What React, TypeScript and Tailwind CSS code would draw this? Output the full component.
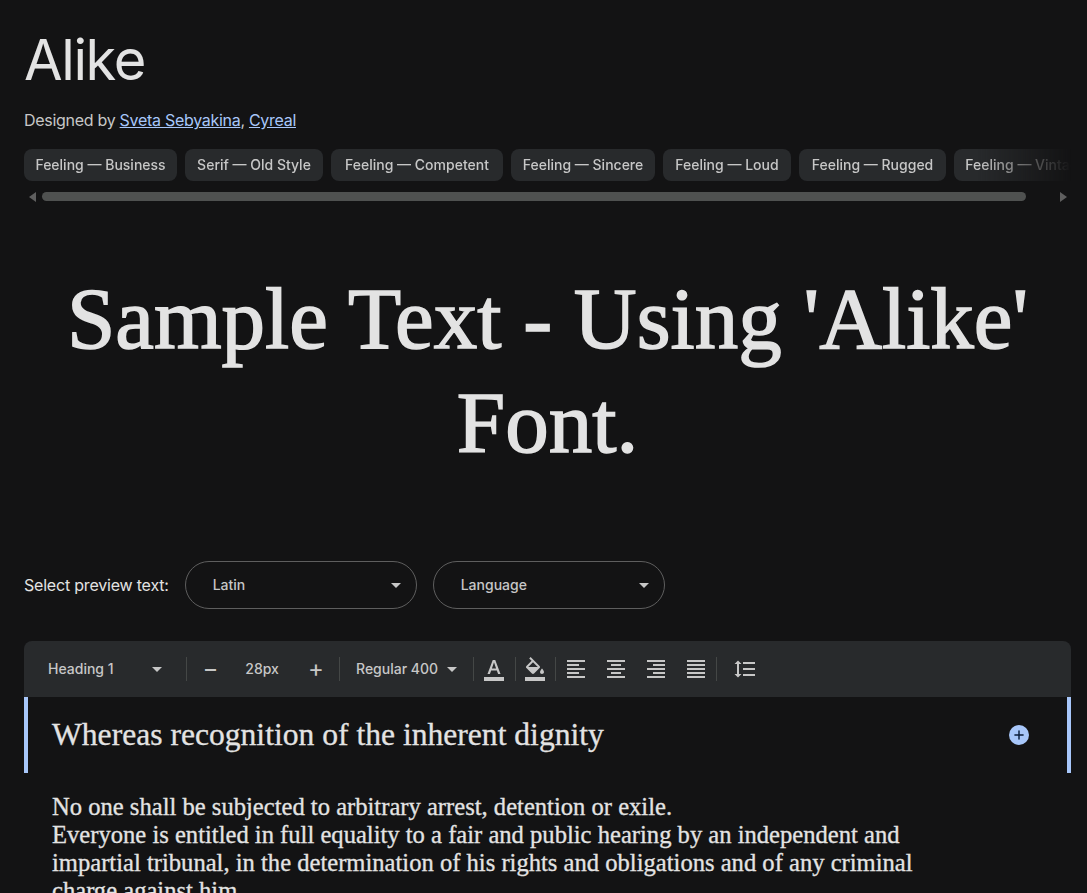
import { Plus } from 'lucide-react'

const chips = [
  { label: 'Feeling — Business', width: 'w-[153px]' },
  { label: 'Serif — Old Style', width: 'w-[138px]' },
  { label: 'Feeling — Competent', width: 'w-[172px]' },
  { label: 'Feeling — Sincere', width: 'w-[144px]' },
  { label: 'Feeling — Loud', width: 'w-[128px]' },
  { label: 'Feeling — Rugged', width: 'w-[147px]' },
  { label: 'Feeling — Vintage', width: 'w-[144px]' },
]

const icons = {
  left: 'M15 15H3v2h12v-2zm0-8H3v2h12V7zM3 13h18v-2H3v2zm0 8h18v-2H3v2zM3 3v2h18V3H3z',
  center: 'M7 15v2h10v-2H7zm-4 6h18v-2H3v2zm0-8h18v-2H3v2zm4-6v2h10V7H7zM3 3v2h18V3H3z',
  right: 'M3 21h18v-2H3v2zm6-4h12v-2H9v2zm-6-4h18v-2H3v2zm6-4h12V7H9v2zM3 3v2h18V3H3z',
  justify: 'M3 21h18v-2H3v2zm0-4h18v-2H3v2zm0-4h18v-2H3v2zm0-4h18V7H3v2zm0-6v2h18V3H3z',
  spacing: 'M6 7h2.5L5 3.5 1.5 7H4v10H1.5L5 20.5 8.5 17H6V7zm4-2v2h12V5H10zm0 14h12v-2H10v2zm0-6h12v-2H10v2z',
  fill: 'M16.56 8.94L7.62 0 6.21 1.41l2.38 2.38-5.15 5.15c-.59.59-.59 1.54 0 2.12l5.5 5.5c.29.29.68.44 1.06.44s.77-.15 1.06-.44l5.5-5.5c.59-.58.59-1.53 0-2.12zM5.21 10L10 5.21 14.79 10H5.21zM19 11.5s-2 2.17-2 3.5c0 1.1.9 2 2 2s2-.9 2-2c0-1.33-2-3.5-2-3.5zM2 20h20v4H2v-4z',
  text: 'M2 20h20v4H2v-4zm3.49-3h2.42l1.27-3.58h5.65L16.09 17h2.42L13.25 3h-2.5L5.49 17zm4.42-5.61l2.03-5.79h.12l2.03 5.79H9.91z',
}

function Icon({ d }: { d: string }) {
  return (
    <svg viewBox="0 0 24 24" className="w-6 h-6 shrink-0 fill-[#c7c7c7]">
      <path d={d} fillRule="evenodd" />
    </svg>
  )
}

function Caret() {
  return <span className="w-0 h-0 border-x-[5px] border-x-transparent border-t-[5px] border-t-[#c7c7c7]" />
}

function Sep() {
  return <span className="w-px h-6 bg-[#444746] shrink-0" />
}

function Select({ label }: { label: string }) {
  return (
    <div className="w-[232px] h-12 rounded-3xl border border-[#5e5e5e] flex items-center justify-between pl-[27px] pr-[15px] text-sm font-medium text-[#c7c7c7]">
      <span>{label}</span>
      <Caret />
    </div>
  )
}

export default function App() {
  return (
    <div className="h-[893px] overflow-hidden bg-[#131314] pl-6 pr-4 text-[#e3e3e3] font-['Inter','Roboto',sans-serif]">
      {/* Header */}
      <h1 className="pt-[26px] text-[56px] leading-[68px] tracking-[-1.4px] font-normal">Alike</h1>
      <p className="mt-4 text-base leading-5 tracking-[-0.29px] text-[#c7c7c7]">
        Designed by <a href="#" className="underline text-[#a8c7fa]">Sveta Sebyakina</a>, <a href="#" className="underline text-[#a8c7fa]">Cyreal</a>
      </p>

      {/* Tags */}
      <div className="mt-[19px] flex gap-2 overflow-hidden [mask-image:linear-gradient(to_right,black_91%,transparent_100%)]">
        {chips.map((chip) => (
          <span key={chip.label} className={`${chip.width} shrink-0 h-8 rounded-lg bg-[#282a2c] flex items-center justify-center text-sm font-medium text-[#c7c7c7] whitespace-nowrap`}>
            {chip.label}
          </span>
        ))}
      </div>
      <div className="mt-[11px] h-[9px] flex items-center gap-[6px] pl-[5px] pr-[4px]">
        <span className="w-0 h-0 border-y-[5px] border-y-transparent border-r-[7px] border-r-[#5f5f5f]" />
        <span className="h-[9px] w-[984px] rounded-full bg-[#4f5150]" />
        <span className="ml-auto w-0 h-0 border-y-[5px] border-y-transparent border-l-[7px] border-l-[#5f5f5f]" />
      </div>

      {/* Sample */}
      <p className="mt-[66px] text-center text-[87px] leading-[104px] [-webkit-text-stroke:1.5px_#e3e3e3] font-['Liberation_Serif',serif]">
        Sample Text - Using 'Alike' Font.
      </p>

      {/* Preview controls */}
      <div className="mt-[86px] flex items-center gap-4">
        <span className="text-base tracking-[-0.2px] text-[#e3e3e3]">Select preview text:</span>
        <Select label="Latin" />
        <Select label="Language" />
      </div>

      {/* Toolbar */}
      <div className="mt-8 h-14 rounded-t-lg bg-[#282a2c] flex items-center pl-6 text-sm font-medium text-[#c7c7c7]">
        <div className="w-[138px] flex items-center justify-between pr-6">
          <span>Heading 1</span>
          <Caret />
        </div>
        <Sep />
        <div className="w-[152px] flex items-center justify-between pl-[18px] pr-[15px]">
          <span className="text-[22px] leading-none">–</span>
          <span>28px</span>
          <span className="text-[24px] leading-none font-normal">+</span>
        </div>
        <Sep />
        <div className="w-[133px] flex items-center justify-between px-4">
          <span>Regular 400</span>
          <Caret />
        </div>
        <Sep />
        <span className="ml-2 mr-[9px] flex"><Icon d={icons.text} /></span>
        <Sep />
        <span className="ml-[7px] mr-2 flex"><Icon d={icons.fill} /></span>
        <Sep />
        <div className="flex gap-4 px-2">
          <Icon d={icons.left} />
          <Icon d={icons.center} />
          <Icon d={icons.right} />
          <Icon d={icons.justify} />
        </div>
        <Sep />
        <span className="ml-4 flex"><Icon d={icons.spacing} /></span>
      </div>

      {/* Editor */}
      <div className="h-[76px] border-x-4 border-x-[#a8c7fa] flex items-center justify-between pl-6 pr-[38px] font-['Liberation_Serif',serif]">
        <span className="text-[31.6px] leading-none [-webkit-text-stroke:0.3px_#e3e3e3]">Whereas recognition of the inherent dignity</span>
        <span className="w-5 h-5 rounded-full bg-[#a8c7fa] flex items-center justify-center text-[#0b1d3a]">
          <Plus size={14} strokeWidth={2.5} />
        </span>
      </div>
      <div className="mt-5 pl-7 pr-[121px] text-[24.6px] leading-7 [-webkit-text-stroke:0.3px_#e3e3e3] font-['Liberation_Serif',serif]">
        <p>No one shall be subjected to arbitrary arrest, detention or exile.</p>
        <p>Everyone is entitled in full equality to a fair and public hearing by an independent and impartial tribunal, in the determination of his rights and obligations and of any criminal charge against him.</p>
      </div>
    </div>
  )
}
